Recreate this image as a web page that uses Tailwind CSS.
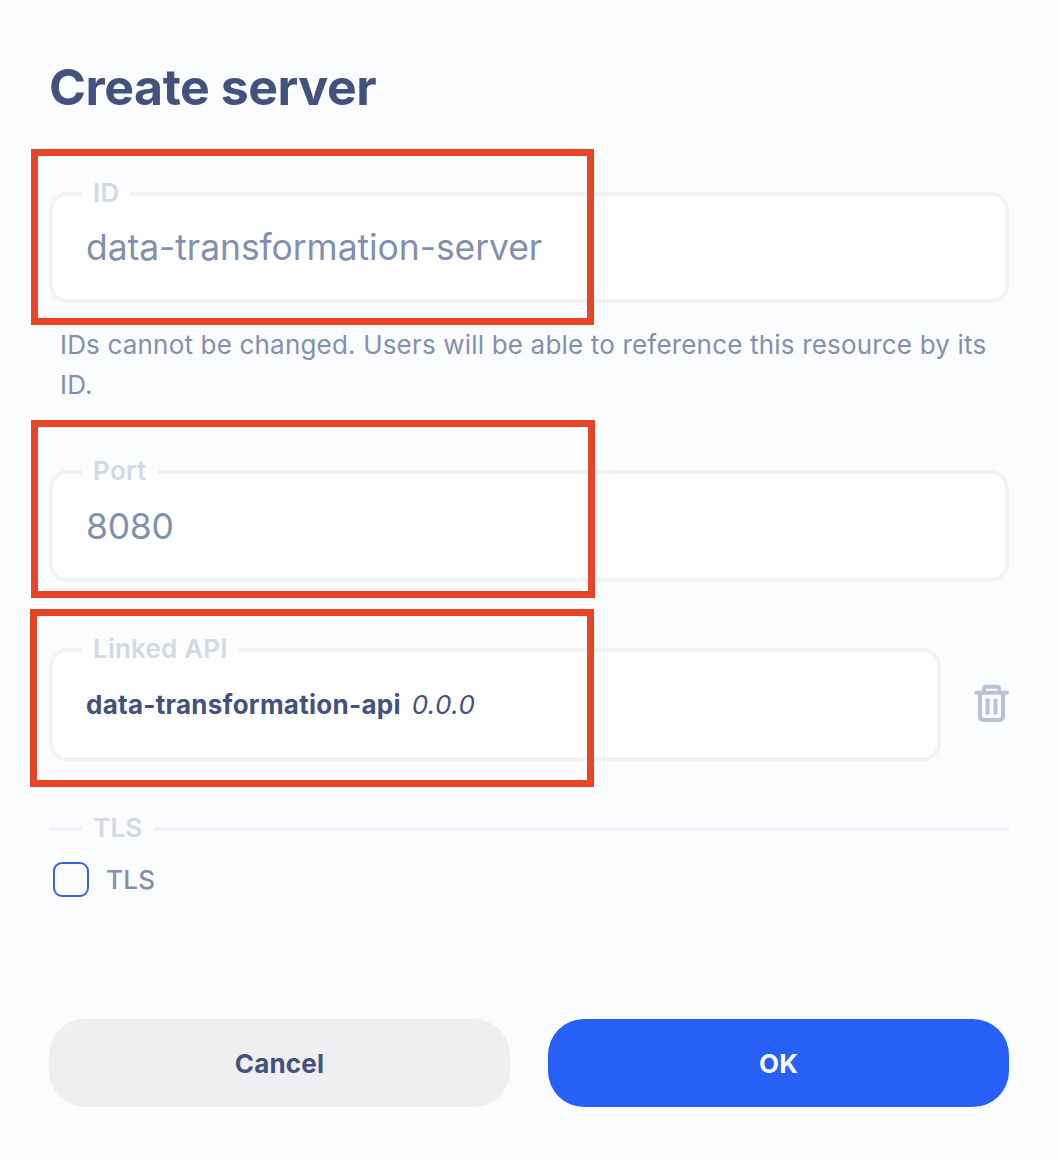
<!DOCTYPE html>
<html lang="en">
<head>
<meta charset="utf-8">
<title>Create server</title>
<script src="https://cdn.jsdelivr.net/npm/@tailwindcss/browser@4"></script>
</head>
<body class="relative h-[1159px] w-[1059px] overflow-hidden bg-[#fafcfe] font-[Inter,sans-serif] text-[#8290b0]">
<main class="flex flex-col pt-[56px] pl-[49px] pr-[50px]">
  <h1 class="h-[62px] text-[50px] leading-[62px] font-bold tracking-[-0.45px] text-[#42527d]">Create server</h1>

  <fieldset class="mt-[61px] h-[124px] rounded-[18px] border-4 border-[#f1f2f5] bg-white px-[29px]">
    <legend class="h-[30px] px-[11px] text-[26px] leading-[28px] font-semibold tracking-[0.2px] text-[#d3d8e5]">ID</legend>
    <div class="flex h-[78px] items-center pl-[4px] text-[35.5px] font-[380] tracking-[-0.08px]">data-transformation-server</div>
  </fieldset>
  <p class="mt-[22px] pl-[11px] text-[26px] leading-[40px] tracking-[0.18px]">IDs cannot be changed. Users will be able to reference this resource by its ID.</p>

  <fieldset class="mt-[52px] h-[125px] rounded-[18px] border-4 border-[#f1f2f5] bg-white px-[29px]">
    <legend class="h-[30px] px-[11px] text-[26px] leading-[28px] font-semibold tracking-[0.3px] text-[#d3d8e5]">Port</legend>
    <div class="flex h-[80px] items-center pl-[4px] text-[35.5px] font-[380] tracking-[-0.3px]">8080</div>
  </fieldset>

  <div class="mt-[53px] flex items-start justify-between">
    <fieldset class="h-[126px] w-[892px] rounded-[18px] border-4 border-[#f1f2f5] bg-white px-[29px]">
      <legend class="h-[30px] px-[11px] text-[26px] leading-[28px] font-semibold tracking-[0.2px] text-[#d3d8e5]">Linked API</legend>
      <div class="flex h-[79px] items-center pl-[4px] text-[26px] text-[#42527d]">
        <span class="font-bold tracking-[0.26px]">data-transformation-api</span><span class="ml-[11px] tracking-[0.4px] italic">0.0.0</span>
      </div>
    </fieldset>
    <svg class="mt-[49px] h-[38px] w-[36px]" viewBox="0 0 36 38" fill="none" stroke="#b9c2da" stroke-width="4" stroke-linecap="round" stroke-linejoin="round"><path d="M3.3 8.8H34M11 8V5q0-2.3 2.3-2.3h10.4Q26 2.700 26 5v3M7 9v23q0 4 4 4h15q4 0 4-4V9"/><path stroke-linecap="butt" d="M14.600 14.500v16M22.500 14.500v16"/></svg>
  </div>

  <fieldset class="mt-[53px] h-[30px] border-t-4 border-[#f1f2f5] px-[33px]">
    <legend class="h-[30px] px-[11px] text-[26px] leading-[28px] font-semibold tracking-[0.3px] text-[#d3d8e5]">TLS</legend>
  </fieldset>
  <label class="mt-[18px] ml-1 flex h-[35px] items-center gap-[17px] text-[26px] font-medium tracking-[0.3px]"><span class="h-[35px] w-9 rounded-[9px] border-2 border-[#3564d4]"></span>TLS</label>

  <div class="mt-[122px] grid grid-cols-2 gap-[38px] text-[26px] font-bold tracking-[0.2px]">
    <button class="h-[88px] rounded-[36px] bg-[#efeff1] text-[#42527d]">Cancel</button>
    <button class="h-[88px] rounded-[36px] bg-[#2760f6] text-white">OK</button>
  </div>
</main>
<div class="absolute top-[149px] left-[31px] h-[176px] w-[563px] border-[7px] border-[#e84427]"></div>
<div class="absolute top-[420px] left-[31px] h-[178px] w-[564px] border-[7px] border-[#e84427]"></div>
<div class="absolute top-[609px] left-[30px] h-[178px] w-[564px] border-[7px] border-[#e84427]"></div>
</body>
</html>
